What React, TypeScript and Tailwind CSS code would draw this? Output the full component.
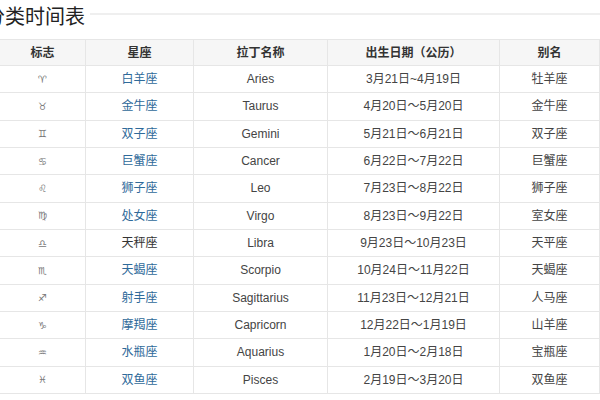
const rows = [
  { sign: "\u2648\uFE0E", name: "白羊座", link: true, latin: "Aries", date: "3月21日~4月19日", alias: "牡羊座" },
  { sign: "\u2649\uFE0E", name: "金牛座", link: true, latin: "Taurus", date: "4月20日～5月20日", alias: "金牛座" },
  { sign: "\u264A\uFE0E", name: "双子座", link: true, latin: "Gemini", date: "5月21日～6月21日", alias: "双子座" },
  { sign: "\u264B\uFE0E", name: "巨蟹座", link: true, latin: "Cancer", date: "6月22日～7月22日", alias: "巨蟹座" },
  { sign: "\u264C\uFE0E", name: "狮子座", link: true, latin: "Leo", date: "7月23日～8月22日", alias: "狮子座" },
  { sign: "\u264D\uFE0E", name: "处女座", link: true, latin: "Virgo", date: "8月23日～9月22日", alias: "室女座" },
  { sign: "\u264E\uFE0E", name: "天秤座", link: false, latin: "Libra", date: "9月23日～10月23日", alias: "天平座" },
  { sign: "\u264F\uFE0E", name: "天蝎座", link: true, latin: "Scorpio", date: "10月24日～11月22日", alias: "天蝎座" },
  { sign: "\u2650\uFE0E", name: "射手座", link: true, latin: "Sagittarius", date: "11月23日～12月21日", alias: "人马座" },
  { sign: "\u2651\uFE0E", name: "摩羯座", link: true, latin: "Capricorn", date: "12月22日～1月19日", alias: "山羊座" },
  { sign: "\u2652\uFE0E", name: "水瓶座", link: true, latin: "Aquarius", date: "1月20日～2月18日", alias: "宝瓶座" },
  { sign: "\u2653\uFE0E", name: "双鱼座", link: true, latin: "Pisces", date: "2月19日～3月20日", alias: "双鱼座" },
];

const cell = "border border-[#e6e6e6] text-center align-middle";

export default function App() {
  return (
    <div className="h-[400px] w-[600px] overflow-hidden bg-white font-['Liberation_Sans','Noto_Sans_CJK_SC',sans-serif] text-[#444]">
      <div className="flex h-[39px] items-start">
        <h2 className="ml-[-15px] mt-[6px] shrink-0 text-[20px] leading-[22px] font-normal text-[#222]">
          分类时间表
        </h2>
        <div className="mt-[13px] ml-[5px] h-[2px] flex-1 bg-[#efefef]" />
      </div>
      <table className="ml-[-1px] w-[600px] table-fixed border-collapse text-[12px]">
        <colgroup>
          <col className="w-[86px]" />
          <col className="w-[108px]" />
          <col className="w-[134px]" />
          <col className="w-[172px]" />
          <col className="w-[100px]" />
        </colgroup>
        <thead>
          <tr className="h-[26px] bg-[#f6f6f6] font-bold text-[#333]">
            <th className={cell}>标志</th>
            <th className={cell}>星座</th>
            <th className={cell}>拉丁名称</th>
            <th className={cell}>出生日期（公历）</th>
            <th className={cell}>别名</th>
          </tr>
        </thead>
        <tbody>
          {rows.map((r) => (
            <tr key={r.latin} className="h-[27.33px]">
              <td className={`${cell} font-['DejaVu_Sans',sans-serif] text-[10px] text-[#777]`}>{r.sign}</td>
              <td className={`${cell} ${r.link ? "text-[#2f6a9a]" : "text-[#333]"}`}>{r.name}</td>
              <td className={cell}>{r.latin}</td>
              <td className={cell}>{r.date}</td>
              <td className={cell}>{r.alias}</td>
            </tr>
          ))}
        </tbody>
      </table>
    </div>
  );
}
